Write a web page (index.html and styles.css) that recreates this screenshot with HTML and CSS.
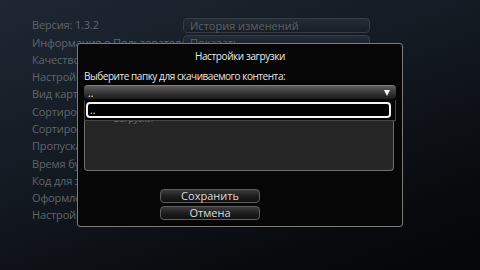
FILE: index.html
```html
<!DOCTYPE html>
<html lang="ru">
<head>
<meta charset="utf-8">
<link rel="stylesheet" href="styles.css">
</head>
<body>
<div class="screen">
  <div class="settings">
    <div class="label">Версия: 1.3.2</div><div class="value"><span class="btn">История изменений</span></div>
    <div class="label">Информация о Пользователе</div><div class="value"><span class="btn">Показать</span></div>
    <div class="label">Качество</div><div class="value"></div>
    <div class="label">Настройки</div><div class="value"></div>
    <div class="label">Вид карточки</div><div class="value"></div>
    <div class="label">Сортировка</div><div class="value"></div>
    <div class="label">Сортировка</div><div class="value"></div>
    <div class="label">Пропускать</div><div class="value"></div>
    <div class="label">Время буферизации</div><div class="value"></div>
    <div class="label">Код для загрузки</div><div class="value"></div>
    <div class="label">Оформление</div><div class="value"></div>
    <div class="label">Настройки</div><div class="value"></div>
  </div>

  <div class="dialog">
    <div class="title">Настройки загрузки</div>
    <div class="prompt">Выберите папку для скачиваемого контента:</div>
    <div class="dropdown"><span>..</span><span class="arrow"></span></div>
    <div class="listbox">
      <div class="item"><span class="folder"></span><span class="item-text">Загрузки</span></div>
      <div class="popup"><div class="popup-item">..</div></div>
    </div>
    <div class="actions">
      <div class="dbtn">Сохранить</div>
      <div class="dbtn">Отмена</div>
    </div>
  </div>
</div>
</body>
</html>
```

FILE: styles.css
```css
* { box-sizing: border-box; }
html, body { margin: 0; padding: 0; }
body {
  width: 480px;
  height: 270px;
  overflow: hidden;
  font-family: "Open Sans", "Noto Sans", sans-serif;
  font-size: 11px;
}
.screen {
  position: relative;
  width: 480px;
  height: 270px;
  background: linear-gradient(160deg, #1e2733 0%, #131921 45%, #080a0d 80%, #050608 100%);
}
.settings {
  display: grid;
  grid-template-columns: 151px 187px;
  grid-auto-rows: 17.27px;
  padding: 16.4px 0 0 32px;
}
.label {
  color: #60656c;
  line-height: 17.27px;
  letter-spacing: -0.15px;
  white-space: nowrap;
}
.value {
  display: flex;
  align-items: center;
}
.btn {
  display: block;
  width: 187px;
  height: 15px;
  line-height: 13px;
  padding-left: 6px;
  border: 1px solid #353c46;
  border-radius: 4px;
  background: linear-gradient(#252c36, #181e26);
  color: #5a6068;
  white-space: nowrap;
}
.dialog {
  position: absolute;
  left: 77px;
  top: 43px;
  width: 326px;
  height: 184px;
  border: 1px solid #7c7c7c;
  border-radius: 3px;
  background: #060606;
  padding: 0 6px;
  display: flex;
  flex-direction: column;
}
.title {
  margin-top: 5px;
  line-height: 14px;
  font-size: 10px;
  letter-spacing: -0.4px;
  text-align: center;
  color: #ececec;
}
.prompt {
  margin-top: 6px;
  line-height: 14px;
  font-size: 10px;
  letter-spacing: -0.45px;
  color: #e6e6e6;
  white-space: nowrap;
}
.dropdown {
  margin-top: 2px;
  height: 14px;
  border-radius: 4px;
  border-top: 1px solid #808080;
  background: linear-gradient(#5c5c5c, #2a2a2a 70%, #1c1c1c);
  display: flex;
  justify-content: space-between;
  align-items: center;
  padding: 0 6px 0 4px;
  color: #f0f0f0;
  font-size: 10px;
  line-height: 12px;
}
.arrow {
  width: 0;
  height: 0;
  border-left: 3px solid transparent;
  border-right: 3px solid transparent;
  border-top: 6px solid #f4f4f4;
  margin-top: 1px;
}
.listbox {
  position: relative;
  margin-top: 1px;
  margin-right: 2px;
  height: 71px;
  background: #262626;
  border: 1px solid #6e6e6e;
  border-top: none;
  border-radius: 0 0 4px 4px;
  padding: 13px 0 0 20px;
}
.item {
  display: flex;
  align-items: center;
  height: 10px;
  gap: 3px;
}
.folder {
  width: 6px;
  height: 5px;
  background: #c9a53a;
}
.item-text {
  color: #7a7a7a;
  font-size: 9px;
}
.popup {
  position: absolute;
  left: -1px;
  right: -3px;
  top: 0;
  height: 21px;
  background: #050505;
  border: 1px solid #444;
  border-top: none;
  padding: 2px 4px 0 1px;
}
.popup-item {
  height: 16px;
  border: 2px solid #f4f4f4;
  border-radius: 4px;
  background: #000;
  color: #f0f0f0;
  font-size: 10px;
  line-height: 12px;
  padding-left: 2px;
}
.actions {
  margin-top: 18px;
  margin-left: 76px;
  display: flex;
  flex-direction: column;
  gap: 3px;
}
.dbtn {
  width: 100px;
  height: 14px;
  border: 1px solid #5e5e5e;
  border-radius: 4px;
  background: linear-gradient(#3c3c3c, #1a1a1a 60%, #101010);
  color: #dcdcdc;
  text-align: center;
  line-height: 12px;
}
```
